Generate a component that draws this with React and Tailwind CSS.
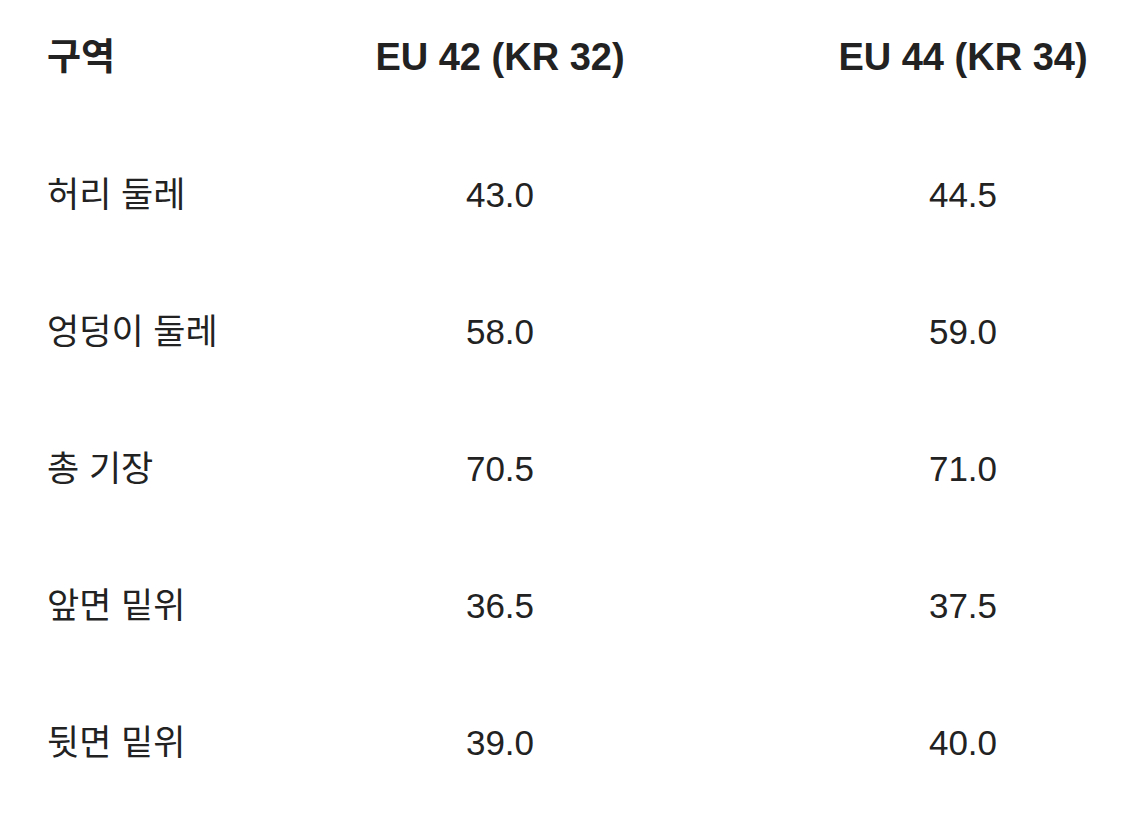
import React from 'react';

const rows = [
  ['허리 둘레', '43.0', '44.5'],
  ['엉덩이 둘레', '58.0', '59.0'],
  ['총 기장', '70.5', '71.0'],
  ['앞면 밑위', '36.5', '37.5'],
  ['뒷면 밑위', '39.0', '40.0'],
];

const App = () => {
  return (
    <div
      className="w-[1125px] h-[825px] overflow-hidden bg-white text-[#222222] pl-[47px] pt-[20px]"
      style={{ fontFamily: '"Liberation Sans", "Noto Sans CJK KR", sans-serif' }}
    >
      {/* Header */}
      <div className="grid grid-cols-[288px_330px_463px] h-[74px] items-center text-[38px] font-bold leading-none">
        <div className="text-[37px]">구역</div>
        <div className="text-center">EU 42 (KR 32)</div>
        <div className="text-center pl-[133px]">EU 44 (KR 34)</div>
      </div>

      {/* Rows */}
      <div className="pt-[32px]">
        {rows.map(([label, a, b]) => (
          <div
            key={label}
            className="grid grid-cols-[288px_330px_463px] h-[137px] items-center text-[35px] leading-none"
          >
            <div>{label}</div>
            <div className="text-center">{a}</div>
            <div className="text-center pl-[133px]">{b}</div>
          </div>
        ))}
      </div>
    </div>
  );
};

export default App;
